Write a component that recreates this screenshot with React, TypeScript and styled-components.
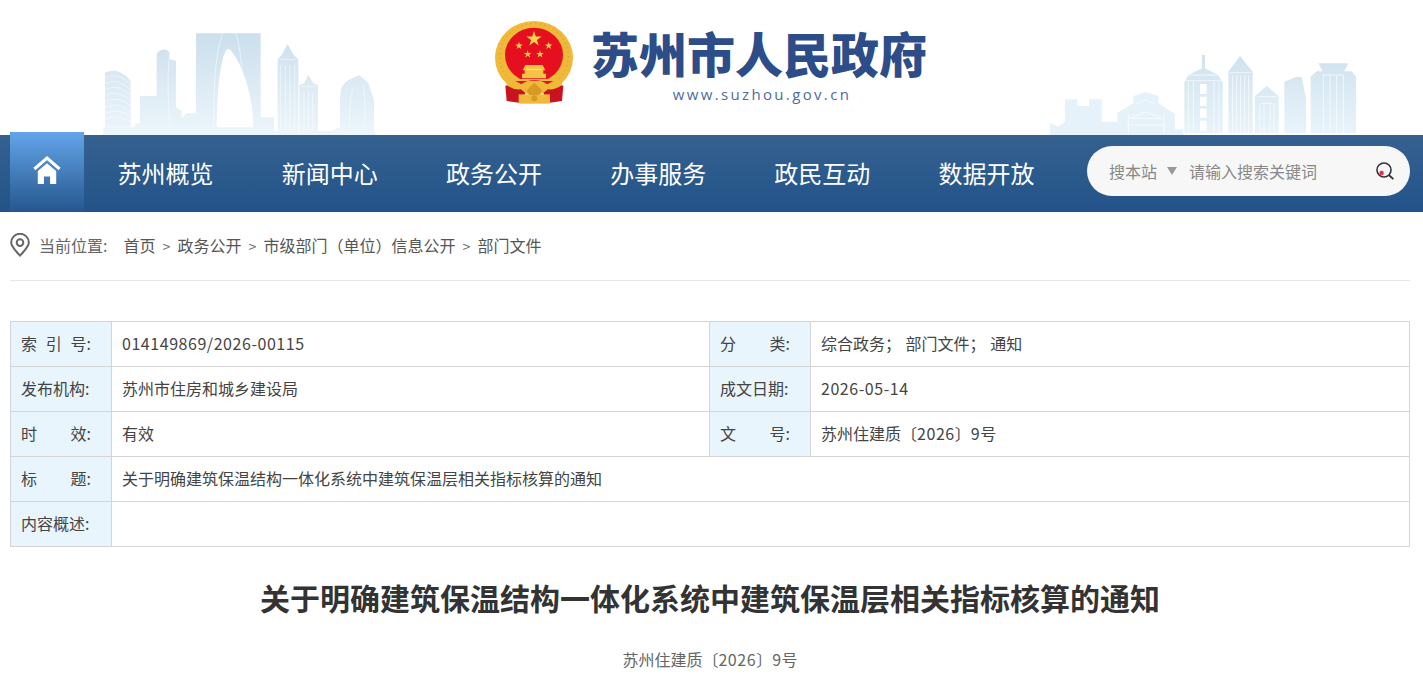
import styled, { createGlobalStyle } from "styled-components";

const GlobalStyle = createGlobalStyle`
  html, body {
    margin: 0;
    padding: 0;
    background: #fff;
    font-family: "Noto Sans CJK SC", "Noto Sans", sans-serif;
    color: #333;
  }
`;

const Page = styled.div`
  width: 100%;
  min-width: 1423px;
`;

const Header = styled.header`
  display: flex;
  align-items: flex-end;
  height: 135px;
  padding-left: 90px;
`;

const Skyline = styled.svg`
  display: block;
  flex: none;
`;

const Brand = styled.div`
  display: flex;
  align-items: flex-start;
  align-self: flex-start;
  margin: 15px auto 0 100px;
  column-gap: 11px;
`;

const BrandText = styled.div`
  display: flex;
  flex-direction: column;
  align-items: center;
  width: 336px;
`;

const BrandTitle = styled.div`
  font-size: 48px;
  line-height: 50px;
  margin-top: 12px;
  font-weight: 900;
  color: #2c4d88;
  white-space: nowrap;
`;

const BrandUrl = styled.div`
  font-family: "Open Sans", sans-serif;
  font-size: 15px;
  line-height: 20px;
  margin: 7px 0 0 6px;
  letter-spacing: 2.35px;
  color: #4c6c9f;
`;

const Nav = styled.nav`
  display: flex;
  align-items: center;
  height: 77px;
  padding: 0 13px 0 10px;
  background: linear-gradient(180deg, #35618f 0%, #225389 100%);
`;

const HomeLink = styled.a`
  flex: none;
  display: flex;
  align-items: flex-start;
  justify-content: center;
  width: 74px;
  height: 80px;
  margin-top: -3px;
  padding-top: 24px;
  box-sizing: border-box;
  background: linear-gradient(180deg, #64a5ea 0%, #25578c 100%);
`;

const NavList = styled.div`
  display: flex;
  column-gap: 68.2px;
  margin: 0 0 2px 33.6px;
`;

const NavItem = styled.a`
  font-size: 24px;
  line-height: 40px;
  color: #fff;
  white-space: nowrap;
`;

const SearchBox = styled.form`
  display: flex;
  align-items: center;
  width: 323px;
  height: 50px;
  margin: -6px 0 0 auto;
  padding: 0 15px 0 22px;
  box-sizing: border-box;
  border-radius: 25px;
  background: #f7f7f7;
`;

const SearchScope = styled.span`
  font-size: 16px;
  color: #888;
  white-space: nowrap;
`;

const ScopeArrow = styled.i`
  width: 0;
  height: 0;
  margin: 1px 12px 0 10px;
  border-left: 5.5px solid transparent;
  border-right: 5.5px solid transparent;
  border-top: 8px solid #999;
`;

const SearchInput = styled.input`
  flex: 1;
  min-width: 0;
  padding: 0;
  border: none;
  outline: none;
  background: transparent;
  font-family: inherit;
  font-size: 16px;
  color: #888;

  &::placeholder {
    color: #888;
    opacity: 1;
  }
`;

const Content = styled.main`
  padding: 0 13px 0 10px;
`;

const Breadcrumb = styled.div`
  display: flex;
  align-items: center;
  height: 69px;
  padding-bottom: 2px;
  box-sizing: border-box;
  border-bottom: 1px solid #e6e6e6;
  font-size: 16px;
  color: #666;
  white-space: nowrap;
`;

const CrumbLabel = styled.span`
  margin: 0 16px 0 9px;
`;

const Crumb = styled.a`
  color: #555;
`;

const CrumbSep = styled.span`
  display: inline-block;
  width: 22px;
  text-align: center;
  font-size: 14px;
  color: #666;
`;

const MetaTable = styled.table`
  width: 1400px;
  margin-top: 40px;
  border-collapse: collapse;
  table-layout: fixed;
  font-size: 16px;
  word-spacing: 1px;
  color: #444;

  td {
    height: 45px;
    padding: 0 10px 2px;
    border: 1px solid #d5d5d5;
    box-sizing: border-box;
  }
`;

const LabelCell = styled.td`
  background: #e8f5fd;
`;

const LabelText = styled.span`
  display: flex;
  justify-content: space-between;
  width: 70px;
`;

const Num = styled.span`
  letter-spacing: 0.55px;
`;

const DocTitle = styled.h1`
  margin: 30px 0 0;
  font-size: 30px;
  line-height: 40px;
  font-weight: 700;
  text-align: center;
  color: #333;
`;

const DocNumber = styled.p`
  margin: 30px 0 0;
  padding-bottom: 24px;
  font-size: 16px;
  line-height: 24px;
  text-align: center;
  color: #666;
`;

function LeftSkyline() {
  return (
    <Skyline width="300" height="115" viewBox="0 0 900 345">
      <defs>
        <linearGradient id="skyL" x1="0" y1="40" x2="0" y2="345" gradientUnits="userSpaceOnUse">
          <stop offset="0" stopColor="#cbdfed" />
          <stop offset="1" stopColor="#edf6fb" />
        </linearGradient>
      </defs>
      <g fill="url(#skyL)">
        <path d="M40 345V322H135V310H150V228H200V100Q218 80 238 95V118L258 122V262L275 272V295L290 280H318V40H512V292H552V332H563V118L575 105L593 72L611 105L625 118V332H628V195L642 190L655 165L670 190L684 195V332H725L750 322V230Q752 190 780 178L808 166L835 190L852 240V325L858 345Z" />
        <path d="M45 158Q85 140 122 182V320H45Z" />
      </g>
      <g fill="none" stroke="#fff" strokeOpacity=".75" strokeWidth="2">
        <path d="M45 172Q85 155 122 194M45 190Q85 172 122 210M45 208Q85 190 122 226M45 226Q85 208 122 242M45 244Q85 226 122 258M45 262Q85 244 122 274M45 280Q85 262 122 290M45 298Q85 280 122 306" />
        <path d="M372 320Q368 120 398 40M462 320Q462 120 438 40" />
        <path d="M237 118Q230 200 240 320M780 320Q775 240 790 205M822 320Q828 250 820 195" />
        <path d="M572 135V332M586 135V332M600 135V332M614 135V332M568 118H620M642 215V332M655 215V332M668 215V332M634 200H680" />
      </g>
      <path fill="#fff" d="M380 322C380 200 395 92 414 86C436 92 490 200 490 322Z" />
    </Skyline>
  );
}

function RightSkyline() {
  return (
    <Skyline width="383" height="95" viewBox="0 0 1149 285">
      <defs>
        <linearGradient id="skyR" x1="0" y1="45" x2="0" y2="285" gradientUnits="userSpaceOnUse">
          <stop offset="0" stopColor="#cfe2ef" />
          <stop offset="1" stopColor="#e9f4fa" />
        </linearGradient>
      </defs>
      <path
        fill="#e6f2f9"
        d="M30 285V250L55 260L75 245V178H112V198H147V178H185V245H232V218L280 190V168L316 156L355 168V190L405 222V268H430V285Z"
      />
      <g fill="url(#skyR)">
        <path d="M433 280V128L445 105L486 85V45H495V85L535 105L548 128V280Z" />
        <path d="M565 280V95L600 48L638 95V280Z" />
        <path d="M645 280V168L680 138L716 168V280Z" />
        <path d="M733 280V125L765 112L785 110L798 175V280Z" />
        <path d="M812 280V110L830 94H848L835 70H926L912 94H935L948 110V280Z" />
      </g>
      <g fill="none" stroke="#fff" strokeOpacity=".8" strokeWidth="2.5">
        <path d="M445 125V280M460 125V280M522 125V280M537 125V280M438 122H544M447 105H535" />
        <path d="M578 105V280M590 105V280M602 105V280M614 105V280M626 105V280M570 98H634" />
        <path d="M660 190V280M672 190V280M690 190V280M702 190V280M652 170H710M664 190H698" />
        <path d="M850 105V280M870 105V280M890 105V280M910 105V280M850 105H910" />
        <path d="M270 235L318 215L365 235H270M290 192L318 180L345 192M262 255H375M265 225V280M372 225V280" />
      </g>
      <path fill="#fff" d="M480 132H500V162H480ZM480 170H500V198H480ZM480 206H500V234H480ZM480 242H500V272H480Z" />
    </Skyline>
  );
}

const starPath = (cx: number, cy: number, r: number) => {
  const pts: string[] = [];
  for (let i = 0; i < 10; i++) {
    const rad = i % 2 === 0 ? r : r * 0.382;
    const a = -Math.PI / 2 + (i * Math.PI) / 5;
    pts.push(`${(cx + rad * Math.cos(a)).toFixed(1)},${(cy + rad * Math.sin(a)).toFixed(1)}`);
  }
  return pts.join(" ");
};

function Emblem() {
  return (
    <svg width="90" height="95" viewBox="0 0 270 285" style={{ display: "block", flex: "none" }}>
      <ellipse cx="132" cy="128" rx="117" ry="110" fill="#f0b93a" />
      <ellipse cx="132" cy="124" rx="103" ry="98" fill="none" stroke="#d99a24" strokeWidth="3" strokeDasharray="4 10" />
      <ellipse cx="132" cy="120" rx="87" ry="82" fill="#e60f20" />
      <polygon fill="#f9d648" points={starPath(132, 72, 24)} />
      <polygon fill="#f9d648" points={starPath(87, 92, 12)} />
      <polygon fill="#f9d648" points={starPath(176, 92, 12)} />
      <polygon fill="#f9d648" points={starPath(113, 118, 12)} />
      <polygon fill="#f9d648" points={starPath(150, 118, 12)} />
      <path fill="#f5c445" d="M106 150H158L166 166H160V176H168V190H96V176H104V166H98Z" />
      <path fill="#fff" fillOpacity=".5" d="M110 162H154V165H110Z" />
      <path fill="#c9141f" d="M46 212L74 206L106 234L92 264L50 258Z" />
      <path fill="#c9141f" d="M220 212L192 206L160 234L174 264L216 258Z" />
      <path
        fill="#f0b93a"
        d="M52 192H214L216 210Q186 232 158 218L133 204L108 218Q80 232 50 210Z"
      />
      <path fill="#e60f20" d="M76 198H190L172 208Q152 194 133 196Q114 194 94 208Z" />
      <path fill="#f0b93a" d="M86 238H180V266H86Z" />
      <path fill="#d99a24" d="M110 226L133 204L156 226L148 240H118Z" />
      <circle cx="133" cy="250" r="9" fill="#d99a24" />
    </svg>
  );
}

function HomeIcon() {
  return (
    <svg width="28" height="28" viewBox="0 0 80 82">
      <path fill="none" stroke="#fff" strokeWidth="9" d="M3 38L40 6L77 38" />
      <path fill="#fff" d="M13 44L40 21L67 44V82H49V60H31V82H13Z" />
    </svg>
  );
}

function PinIcon() {
  return (
    <svg width="20" height="24" viewBox="0 0 20 24" style={{ flex: "none" }}>
      <path
        fill="none"
        stroke="#666"
        strokeWidth="2"
        d="M10 22.6C5.5 17.5 1.2 14 1.2 9.6A8.8 8.8 0 0 1 18.8 9.6C18.8 14 14.5 17.5 10 22.6Z"
      />
      <circle cx="10" cy="9.6" r="3.3" fill="none" stroke="#666" strokeWidth="2" />
    </svg>
  );
}

function SearchIcon() {
  return (
    <svg width="20" height="20" viewBox="0 0 20 20" style={{ flex: "none" }}>
      <circle cx="9" cy="9" r="7" fill="none" stroke="#333" strokeWidth="1.6" />
      <path stroke="#333" strokeWidth="1.8" d="M13.8 14L18.4 18.2" />
      <circle cx="6.6" cy="12" r="2.2" fill="#ee2b47" />
    </svg>
  );
}

function Label({ text }: { text: string }) {
  return (
    <LabelCell>
      <LabelText>
        {text.split(" ").map((part) => (
          <span key={part}>{part}</span>
        ))}
      </LabelText>
    </LabelCell>
  );
}

const navItems = ["苏州概览", "新闻中心", "政务公开", "办事服务", "政民互动", "数据开放"];
const crumbs = ["首页", "政务公开", "市级部门（单位）信息公开", "部门文件"];

export default function App() {
  return (
    <Page>
      <GlobalStyle />
      <Header>
        <LeftSkyline />
        <Brand>
          <Emblem />
          <BrandText>
            <BrandTitle>苏州市人民政府</BrandTitle>
            <BrandUrl>www.suzhou.gov.cn</BrandUrl>
          </BrandText>
        </Brand>
        <RightSkyline />
      </Header>
      <Nav>
        <HomeLink>
          <HomeIcon />
        </HomeLink>
        <NavList>
          {navItems.map((item) => (
            <NavItem key={item}>{item}</NavItem>
          ))}
        </NavList>
        <SearchBox>
          <SearchScope>搜本站</SearchScope>
          <ScopeArrow />
          <SearchInput placeholder="请输入搜索关键词" />
          <SearchIcon />
        </SearchBox>
      </Nav>
      <Content>
        <Breadcrumb>
          <PinIcon />
          <CrumbLabel>当前位置:</CrumbLabel>
          {crumbs.map((c, i) => (
            <span key={c}>
              {i > 0 && <CrumbSep>&gt;</CrumbSep>}
              <Crumb>{c}</Crumb>
            </span>
          ))}
        </Breadcrumb>
        <MetaTable>
          <colgroup>
            <col style={{ width: 101 }} />
            <col style={{ width: 598 }} />
            <col style={{ width: 101 }} />
            <col />
          </colgroup>
          <tbody>
            <tr>
              <Label text="索 引 号:" />
              <td><Num>014149869/2026-00115</Num></td>
              <Label text="分 类:" />
              <td>综合政务； 部门文件； 通知</td>
            </tr>
            <tr>
              <Label text="发布机构:" />
              <td>苏州市住房和城乡建设局</td>
              <Label text="成文日期:" />
              <td><Num>2026-05-14</Num></td>
            </tr>
            <tr>
              <Label text="时 效:" />
              <td>有效</td>
              <Label text="文 号:" />
              <td>苏州住建质〔<Num>2026</Num>〕<Num>9</Num>号</td>
            </tr>
            <tr>
              <Label text="标 题:" />
              <td colSpan={3}>关于明确建筑保温结构一体化系统中建筑保温层相关指标核算的通知</td>
            </tr>
            <tr>
              <Label text="内容概述:" />
              <td colSpan={3}></td>
            </tr>
          </tbody>
        </MetaTable>
        <DocTitle>关于明确建筑保温结构一体化系统中建筑保温层相关指标核算的通知</DocTitle>
        <DocNumber>苏州住建质〔<Num>2026</Num>〕<Num>9</Num>号</DocNumber>
      </Content>
    </Page>
  );
}
